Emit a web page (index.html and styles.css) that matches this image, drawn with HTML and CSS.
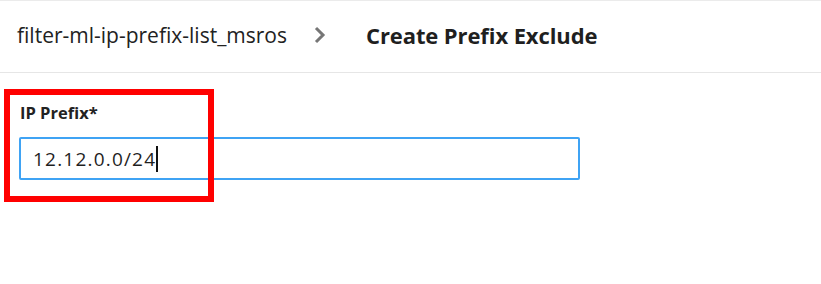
FILE: index.html
```html
<!DOCTYPE html>
<html>
<head>
<meta charset="utf-8">
<link rel="stylesheet" href="styles.css">
</head>
<body>
<div class="page">
  <header class="header">
    <span class="crumb">filter-ml-ip-prefix-list_msros</span>
    <svg class="chev" width="12" height="18" viewBox="0 0 12 18"><path d="M2 2 L9 9 L2 16" fill="none" stroke="#767676" stroke-width="3"/></svg>
    <span class="title">Create Prefix Exclude</span>
  </header>
  <main class="form">
    <div class="field">
      <label class="label">IP Prefix*</label>
      <div class="input"><span class="value">12.12.0.0/24</span><span class="caret"></span></div>
    </div>
    <div class="highlight"></div>
  </main>
</div>
</body>
</html>
```
FILE: styles.css
```css
html, body { margin: 0; padding: 0; background: #fff; }
body { font-family: "Open Sans", "Noto Sans", sans-serif; color: #1f1f1f; }
.page { position: relative; width: 821px; height: 284px; border-top: 1px solid #ebebeb; box-sizing: border-box; }
.header { height: 72px; border-bottom: 1px solid #e6e6e6; display: flex; align-items: center; padding-left: 17px; padding-bottom: 3px; box-sizing: border-box; }
.crumb { font-size: 21px; color: #222; }
.chev { margin-left: 27px; margin-right: 40px; }
.title { font-size: 22px; font-weight: 700; color: #1f1f1f; letter-spacing: -0.1px; }
.form { padding: 30px 0 0 19px; }
.field { display: flex; flex-direction: column; }
.label { font-size: 16.5px; font-weight: 700; color: #222; padding-left: 1px; line-height: 20px; }
.input { margin-top: 14px; width: 561px; height: 43px; box-sizing: border-box; border: 2px solid #3fa3f4; border-radius: 2px; display: flex; align-items: center; padding-left: 12px; }
.value { font-size: 19px; letter-spacing: 1.2px; color: #1f1f1f; }
.caret { width: 2px; height: 26px; background: #111; margin-left: 0; }
.highlight { position: absolute; left: 4px; top: 88px; width: 210px; height: 113px; border: 6px solid #ff0000; box-sizing: border-box; }
```
